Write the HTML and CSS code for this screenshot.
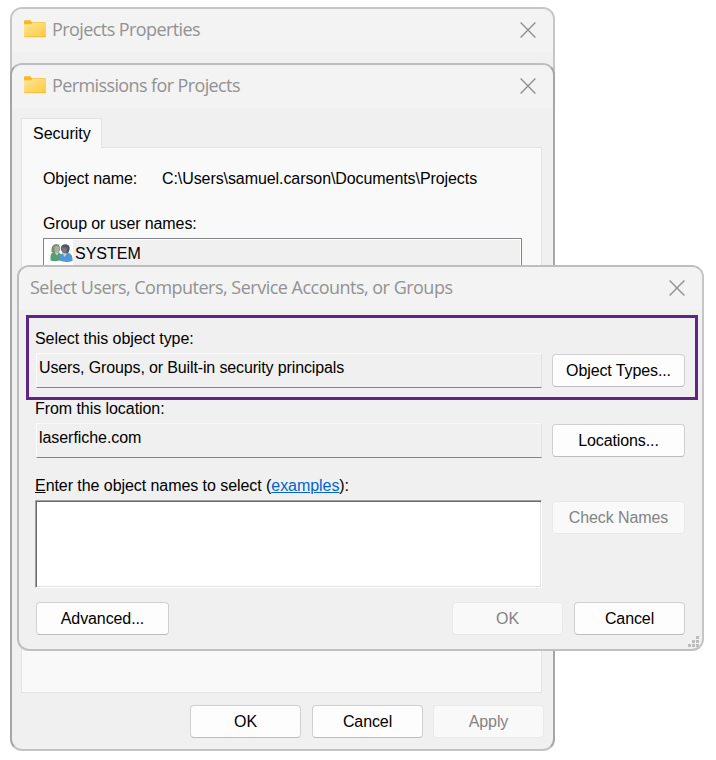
FILE: index.html
```html
<!DOCTYPE html>
<html lang="en">
<head>
<meta charset="utf-8">
<title>Projects Properties</title>
<link rel="stylesheet" href="styles.css">
</head>
<body>
<svg class="defs" width="0" height="0" aria-hidden="true">
  <defs>
    <linearGradient id="paper" x1="0" y1="0" x2="1" y2="1"><stop offset="0" stop-color="#ffe69c"/><stop offset="1" stop-color="#ffca3c"/></linearGradient>
    <symbol id="folder" viewBox="0 0 22 18">
      <path d="M0 1.300Q0 .3 1 .3H6.500L8 2.300H21Q22 2.300 22 3.300V16H0Z" fill="#f9b81f"/>
      <path d="M0 4.200H7L8.500 2.800H21.200Q22 2.800 22 3.600V16.200Q22 17 21.200 17H.8Q0 17 0 16.200Z" fill="url(#paper)"/>
      <path d="M.4 16.700H21.600" stroke="#efb42c" stroke-width=".7"/>
    </symbol>
    <symbol id="close" viewBox="0 0 16 16"><path d="M.6.6 15.400 15.400M15.400.6.6 15.400" stroke="#8f8f8f" stroke-width="1.35" fill="none"/></symbol>
  </defs>
</svg>
<div class="desktop">
  <section class="window properties">
    <header class="titlebar"><svg class="folder"><use href="#folder"/></svg><h1 class="t-properties">Projects Properties</h1><svg class="close"><use href="#close"/></svg></header>
    <div class="tab-edge"></div>
  </section>

  <section class="window permissions">
    <header class="titlebar"><svg class="folder"><use href="#folder"/></svg><h1 class="t-permissions">Permissions for Projects</h1><svg class="close"><use href="#close"/></svg></header>
    <div class="tabs"><div class="tab">Security</div></div>
    <div class="panel">
      <div class="object"><span class="key">Object name:</span><span class="path">C:\Users\samuel.carson\Documents\Projects</span></div>
      <div class="list-label">Group or user names:</div>
      <div class="list">
        <svg class="people" viewBox="0 0 24 20">
          <path d="M1.500 17.500V13.500Q1.500 10.500 4 9.500L8.500 9Q12.500 10 12.500 14V17Q7 19 1.500 17.500Z" fill="#559f76"/>
          <path d="M2.300 8.500Q2 1 7.500.9 11.500 1 11 7L9.500 10H4Z" fill="#7c9169"/>
          <path d="M5.500 4Q8 1.700 10.300 4.200V7.500Q9.500 10.300 7.800 10.400 5.700 9.500 5.500 7Z" fill="#a2b2ac"/>
          <path d="M5.500 9.500 8 12.500 9.700 9.800" fill="#c6d5cc"/>
          <path d="M10.500 17.500Q10 11.500 14.500 9.800H19Q23 10.500 23.500 15.500V18Q17 20 10.500 17.500Z" fill="#5296d6"/>
          <path d="M13.500 10H18.500L15.500 14Z" fill="#bbd5e8"/>
          <path d="M11.800 5Q12.300.9 16.800 1.200 21 1.500 20.700 6 20.300 9.500 18 10.500L13.500 9.500Q11.800 7.500 11.800 5Z" fill="#4c5767"/>
          <path d="M12.600 4.500Q15 4.800 17.200 4.300L18 7Q17.500 10.200 15.500 10.600 12.800 9.800 12.600 7Z" fill="#7a7774"/>
        </svg><span class="list-item">SYSTEM</span>
      </div>
    </div>
    <footer class="actions"><button>OK</button><button>Cancel</button><button class="apply" disabled>Apply</button></footer>
  </section>

  <section class="window select">
    <header class="titlebar"><h1 class="t-select">Select Users, Computers, Service Accounts, or Groups</h1><svg class="close"><use href="#close"/></svg></header>
    <div class="highlight">
      <div class="label">Select this object type:</div>
      <div class="row"><div class="field types">Users, Groups, or Built-in security principals</div><button>Object Types...</button></div>
    </div>
    <div class="form">
      <div class="label from">From this location:</div>
      <div class="row"><div class="field">laserfiche.com</div><button>Locations...</button></div>
      <div class="label enter"><u>E</u>nter the object names to select (<a>examples</a>):</div>
      <div class="row names"><div class="textarea"></div><button disabled>Check Names</button></div>
      <div class="bottom"><button>Advanced...</button><button class="ok" disabled>OK</button><button class="cancel">Cancel</button></div>
    </div>
    <svg class="grip" viewBox="0 0 11 11"><path d="M8 0h3v3H8zM4 4h3v3H4zM8 4h3v3H8zM0 8h3v3H0zM4 8h3v3H4zM8 8h3v3H8z" fill="#bdbdbd"/></svg>
  </section>
</div>
</body>
</html>
```
FILE: styles.css
```css
* { box-sizing: border-box; }
body { margin: 0; background: #fff; font: 16px/20px "Liberation Sans", Arial, sans-serif; color: #000; }
.defs { position: absolute; }
.desktop { position: relative; width: 716px; height: 760px; overflow: hidden; }
.window { position: absolute; border: 2px solid #c3c3c3; border-radius: 12px; background: #f0f0f0; overflow: hidden; }
.properties { left: 10px; top: 7px; width: 545px; height: 733px; border-color: #c6c6c6; }
.permissions { left: 10px; top: 63px; width: 545px; height: 688px; border-color: #bdbdbd #a6a6a6 #c3c3c3; }
.select { left: 17px; top: 265px; width: 687px; height: 386px; border-color: #bebebe #c6c6c6 #c0c0c0 #bcbcbc; }

.titlebar { display: flex; align-items: center; height: 43px; padding: 0 17px 4px 12px; background: #f3f3f3; }
.select .titlebar { padding-left: 11px; }
.titlebar h1 { margin: 0; font: 400 18px/24px "Open Sans", "Noto Sans", sans-serif; color: #929292; white-space: nowrap; }
.t-properties { letter-spacing: -0.58px; }
.t-permissions { letter-spacing: -0.61px; }
.t-select { letter-spacing: -0.51px; }
.folder { width: 22px; height: 18px; margin: 0 6px 0 0; flex: none; }
.close { width: 16px; height: 16px; margin-left: auto; margin-top: 2px; flex: none; }
.tab-edge { width: 80px; height: 1px; margin: 11px 0 0 158px; background: #e2e2e2; }

.tabs { display: flex; padding: 10px 0 0 9px; }
.tab { width: 81px; height: 30px; margin-bottom: -1px; padding: 5px 0 0 11px; border: 1px solid #e3e3e3; border-bottom: 0; background: #f9f9f9; position: relative; z-index: 1; }
.panel { width: 521px; height: 546px; margin-left: 9px; padding: 21px 19px 0 21px; border: 1px solid #e3e3e3; background: #f9f9f9; }
.object { display: flex; white-space: nowrap; }
.key { width: 119px; letter-spacing: -0.08px; }
.path { letter-spacing: -0.08px; }
.list-label { margin-top: 25px; letter-spacing: -0.1px; }
.list { display: flex; height: 100px; margin-top: 4px; border: 1px solid #81858e; background: #fff; padding: 1px 1px 0 5px; }
.people { width: 24px; height: 20px; margin-top: 3px; flex: none; }
.list-item { flex: 1; height: 28px; padding: 4px 0 0 2px; background: #f0f0f0; }

button { width: 133px; height: 33px; padding: 0; border: 1px solid #d0d0d0; border-bottom-color: #bcbcbc; border-radius: 4px; background: #fdfdfd; font: inherit; letter-spacing: -0.1px; color: #000; text-align: center; flex: none; }
button:disabled { border-color: #e9e9e9; background: #f9f9f9; color: #838383; }
.actions { display: flex; justify-content: flex-end; gap: 11px; padding: 12px 9px 0 0; }
.actions button { width: 111px; }
.actions .apply { margin-left: -1px; }

.highlight { margin: 5px 4px 0 7px; height: 85px; padding: 11px 10px 0 6px; border: 3px solid #602487; }
.label { white-space: nowrap; margin-bottom: 4px; letter-spacing: -0.06px; }
.row { display: flex; align-items: center; justify-content: space-between; }
.field { width: 506px; height: 35px; margin-left: 1px; padding: 4px 0 0 2px; border: 1px solid #fbfbfb; border-top-color: #f9f9f9; border-right-color: #e3e3e3; border-bottom-color: #858585; white-space: nowrap; letter-spacing: -0.06px; }
.types { letter-spacing: -0.135px; }
.form { padding: 0 17px 0 16px; }
.label.from { line-height: 18px; margin-bottom: 5px; }
.label.enter { margin: 18px 0 4px; }
a { color: #0066cc; text-decoration: underline; }
.names { align-items: flex-start; }
.textarea { width: 507px; height: 88px; border: 1px solid #a0a0a0; border-right-color: #fff; border-bottom-color: #fff; background: #fff; box-shadow: inset 1px 1px #696969, inset -1px -1px #e3e3e3; }
.names button { margin-top: 1px; }
.bottom { display: flex; margin: 14px 0 0 1px; }
.ok { width: 111px; margin-left: auto; }
.cancel { width: 111px; margin-left: 11px; }
.grip { position: absolute; right: 3px; bottom: 2px; width: 11px; height: 11px; }
```
